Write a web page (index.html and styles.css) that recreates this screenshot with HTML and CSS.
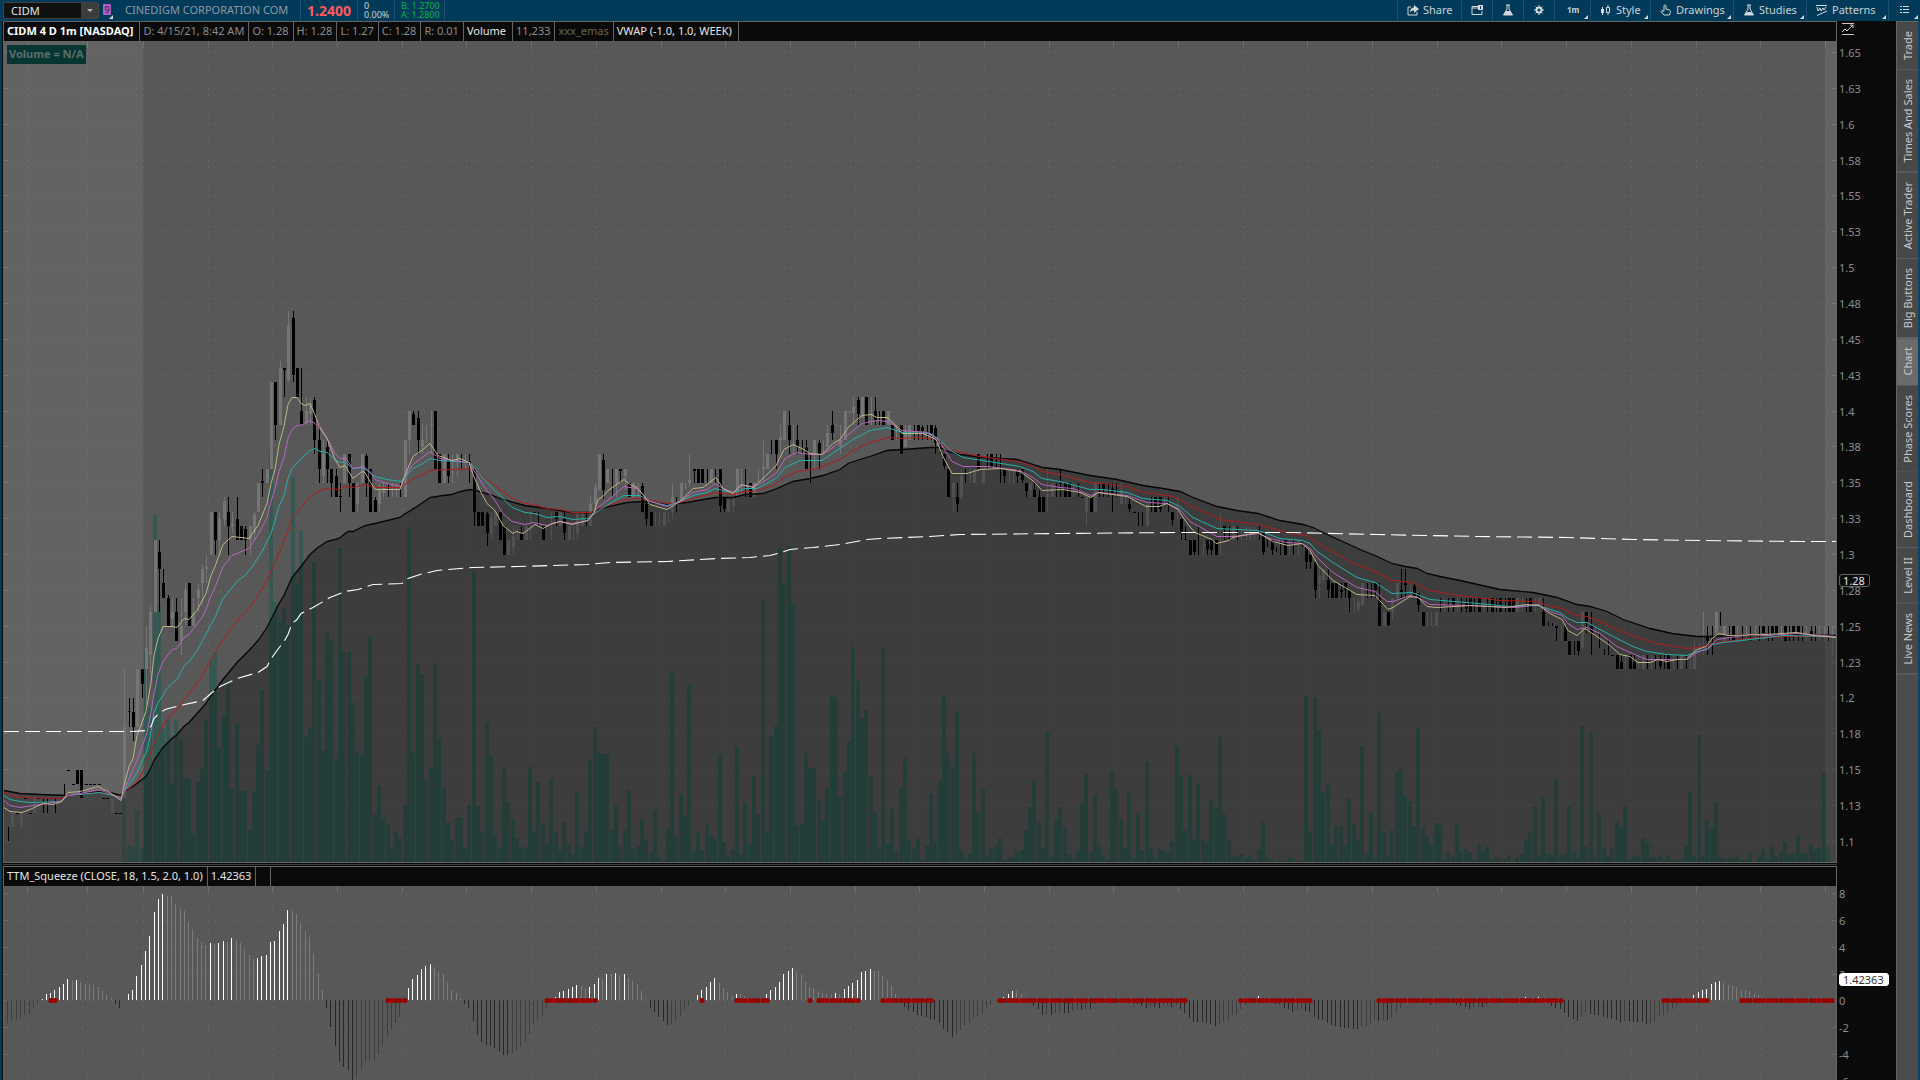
FILE: index.html
```html
<!DOCTYPE html>
<html lang="en">
<head>
<meta charset="utf-8">
<title>CIDM – Chart</title>
<link rel="stylesheet" href="styles.css">
</head>
<body>
<header class="topbar">
  <div class="symbol">
    <input class="symbol-input" type="text" value="CIDM" aria-label="Symbol">
    <button class="symbol-drop" aria-label="Recent symbols"></button>
  </div>
  <button class="link-badge has-menu" aria-label="Link group 9">9</button>
  <span class="company">CINEDIGM CORPORATION COM</span>
  <span class="last-price">1.2400</span>
  <span class="quote"><span>0</span><span>0.00%</span></span>
  <span class="quote quote-up"><span>B: 1.2700</span><span>A: 1.2800</span></span>
  <nav class="tools">
    <button class="tool tool-share"><svg class="icon" viewBox="0 0 12 12"><path d="M4 3H1v8h9V8" class="line"/><path d="M7 1l5 4-5 4V6.500C5 6.500 4 7 3 8.500 3 5 5 3.500 7 3.500z"/></svg>Share</button>
    <button class="tool tool-icon" aria-label="Alerts"><svg class="icon" viewBox="0 0 12 12"><path d="M7 2.500H1v8h10V7M1 4h6" class="line"/><path d="M7 1h5v5H7z"/><path d="M9.500 2v3" class="cut"/></svg></button>
    <button class="tool tool-icon" aria-label="Lab"><svg class="icon" viewBox="0 0 12 12"><path d="M4 1h4M5 1v4L1.500 11h9L7 5V1" class="line"/><path d="M4 7h4l2.500 4h-9z"/></svg></button>
    <button class="tool tool-icon" aria-label="Settings"><svg class="icon" viewBox="0 0 12 12"><path d="M6 1v10M1 6h10M2.500 2.500l7 7M9.500 2.500l-7 7" class="line"/><circle cx="6" cy="6" r="3.500"/><circle cx="6" cy="6" r="1.500" class="hole"/></svg></button>
    <button class="tool tool-frame has-menu">1m</button>
    <button class="tool tool-style has-menu"><svg class="icon" viewBox="0 0 12 12"><path d="M1 5h3v4H1zM2 3h1v8H2z"/><path d="M6.500 3.500h3v5h-3zM8 1v2.500M8 8.500V11" class="line"/></svg>Style</button>
    <button class="tool tool-drawings has-menu"><svg class="icon" viewBox="0 0 12 12"><path d="M4 7V2q0-1 1-1t1 1v3l3.500 1q1 .5 1 1.500L9.500 11H4L1 7.500q.5-1.500 2-.5z" class="line"/></svg>Drawings</button>
    <button class="tool tool-studies has-menu"><svg class="icon" viewBox="0 0 12 12"><path d="M4 1h4M5 1v4L1.500 11h9L7 5V1" class="line"/><path d="M4 8h4l2.500 3h-9z"/></svg>Studies</button>
    <button class="tool tool-patterns has-menu"><svg class="icon" viewBox="0 0 12 12"><path d="M0 1.500h11M1 3l1 4 2-3 1 3 2-3 1 2 2-3M1 11.500L11 7" class="line"/></svg>Patterns</button>
    <button class="tool tool-list has-menu" aria-label="Menu"><svg class="icon" viewBox="0 0 12 12"><path d="M2 2.500h2M2 5.500h2M2 8.500h2M5 2.500h6M5 5.500h6M5 8.500h6" class="line"/></svg></button>
  </nav>
</header>
<main class="workspace">
  <section class="charts">
    <div class="panel panel-price">
      <div class="pane">
        <div class="legend">
          <span class="strong study">CIDM 4 D 1m [NASDAQ]</span><span>D: 4/15/21, 8:42 AM</span><span>O: 1.28</span><span>H: 1.28</span><span>L: 1.27</span><span>C: 1.28</span><span>R: 0.01</span><span class="bright study">Volume</span><span>11,233</span><span class="muted">xxx_emas</span><span class="bright study">VWAP (-1.0, 1.0, WEEK)</span>
        </div>
        <div class="plot">
          <svg id="price" viewBox="4 41 1832 821" preserveAspectRatio="none" role="img" aria-label="Price chart"></svg>
          <span class="volume-label">Volume = N/A</span>
        </div>
      </div>
      <div class="axis">
        <svg class="axis-icon" viewBox="0 0 12 14"><path d="M0 1.500h12M0 12.500h12M0 10l3-3 2 2 6-6M8 3h3v3"/></svg>
        <ul class="scale">
          <li>1.65</li><li>1.63</li><li>1.6</li><li>1.58</li><li>1.55</li><li>1.53</li><li>1.5</li><li>1.48</li><li>1.45</li><li>1.43</li><li>1.4</li><li>1.38</li><li>1.35</li><li>1.33</li><li>1.3</li><li>1.28</li><li>1.25</li><li>1.23</li><li>1.2</li><li>1.18</li><li>1.15</li><li>1.13</li><li>1.1</li>
        </ul>
        <span class="tag tag-dark">1.28</span>
      </div>
    </div>
    <div class="splitter"></div>
    <div class="panel panel-squeeze">
      <div class="pane">
        <div class="legend">
          <span class="bright">TTM_Squeeze (CLOSE, 18, 1.5, 2.0, 1.0)</span><span class="bright">1.42363</span><span class="blank"></span>
        </div>
        <div class="plot">
          <svg id="squeeze" viewBox="4 886 1832 194" preserveAspectRatio="none" role="img" aria-label="TTM Squeeze histogram"></svg>
        </div>
      </div>
      <div class="axis">
        <ul class="scale scale-squeeze">
          <li>8</li><li>6</li><li>4</li><li>2</li><li>0</li><li>-2</li><li>-4</li><li>-6</li>
        </ul>
        <span class="tag tag-light">1.42363</span>
      </div>
    </div>
  </section>
  <aside class="rail">
    <button class="tab">Trade</button>
    <button class="tab">Times And Sales</button>
    <button class="tab">Active Trader</button>
    <button class="tab">Big Buttons</button>
    <button class="tab tab-active">Chart</button>
    <button class="tab">Phase Scores</button>
    <button class="tab">Dashboard</button>
    <button class="tab">Level II</button>
    <button class="tab">Live News</button>
  </aside>
</main>
<script src="chart.js"></script>
</body>
</html>
```
FILE: styles.css
```css
* { box-sizing: border-box; }
body {
  margin: 0;
  height: 100vh;
  overflow: hidden;
  display: flex;
  flex-direction: column;
  background: #0a0a0a;
  color: #8c8c8c;
  font: 11px/16px "Noto Sans", "Open Sans", sans-serif;
}
button, input { font: inherit; color: inherit; border: 0; padding: 0; margin: 0; background: none; }
svg { display: block; }

.topbar {
  flex: none;
  height: 21px;
  display: flex;
  align-items: stretch;
  background: #023b59;
}
.symbol {
  display: flex;
  width: 96px;
  height: 17px;
  margin: 2px 4px 0 3px;
  border: 1px solid #444;
  border-radius: 2px;
  background: #111;
}
.symbol-input { flex: 1; min-width: 0; padding-left: 7px; color: #e6e6e6; }
.symbol-drop { width: 17px; background: #3c3c3c; display: flex; align-items: center; justify-content: center; }
.symbol-drop::before { content: ""; border: 3px solid transparent; border-top-color: #b4b4b4; border-bottom: 0; }
.link-badge {
  width: 8px;
  height: 11px;
  margin: 4px 14px 0 0;
  border-radius: 1px;
  background: #b45fc8;
  color: #222;
  font-size: 9px;
  line-height: 11px;
  position: relative;
}
.company { line-height: 20px; color: #8b98a3; width: 175px; white-space: nowrap; }
.last-price {
  width: 57px;
  text-align: center;
  font-size: 14px;
  font-weight: bold;
  line-height: 21px;
  color: #ff5a5f;
  border-left: 1px solid #1b5071;
}
.quote {
  display: flex;
  flex-direction: column;
  padding: 1px 6px 0;
  width: 37px;
  border-left: 1px solid #1b5071;
  color: #c8d2d8;
  font-size: 9px;
  line-height: 9px;
  white-space: nowrap;
}
.quote-up { width: 51px; color: #00b446; border-right: 1px solid #1b5071; }
.tools { display: flex; margin-left: auto; }
.tool {
  position: relative;
  display: flex;
  align-items: center;
  gap: 4px;
  padding-left: 9px;
  padding-bottom: 1px;
  border-left: 1px solid #1b5071;
  color: #c6d2da;
  font-size: 11px;
}
.icon { width: 12px; height: 12px; flex: none; fill: #d2dade; }
.icon .line { fill: none; stroke: #d2dade; }
.icon .cut { stroke: #023b59; }
.icon .hole { fill: #023b59; }
.has-menu::after {
  content: "";
  position: absolute;
  right: 2px;
  bottom: 2px;
  border: 2px solid transparent;
  border-right-color: #d2dade;
  border-bottom-color: #d2dade;
}
.link-badge.has-menu::after { right: -2px; bottom: -4px; }
.tool-share { width: 64px; }
.tool-icon { width: 31px; }
.tool-frame { width: 36px; padding-left: 12px; font-size: 8px; font-weight: bold; }
.tool-style { width: 60px; }
.tool-drawings { width: 83px; }
.tool-studies { width: 73px; }
.tool-patterns { width: 82px; }
.tool-list { width: 32px; }

.workspace {
  flex: 1;
  min-height: 0;
  display: flex;
  border-left: 2px solid #023b59;
  border-right: 2px solid #0b4666;
}
.charts { flex: 1; min-width: 0; padding-left: 1px; display: grid; grid-template-rows: 842fr 3px 214fr; }
.panel { display: flex; min-height: 0; }
.pane {
  flex: 1;
  min-width: 0;
  display: flex;
  flex-direction: column;
  border: 1px solid #646464;
}
.panel-squeeze .pane { border-bottom: 0; }
.splitter { border: solid #0a0a0a; border-width: 1px 0; background: #3c3c3c; margin-right: 59px; }
.legend { flex: none; display: flex; height: 19px; background: #0a0a0a; line-height: 18px; white-space: nowrap; }
.legend span { padding: 0 4px 0 3px; border-right: 1px solid #646464; }
.legend .study { padding-right: 6px; }
.legend .strong { color: #fff; font-weight: bold; }
.legend .bright { color: #e6e6e6; }
.legend .muted { color: #6b6650; }
.legend .blank { width: 15px; }
.plot { flex: 1; min-height: 0; position: relative; background: #585858; }
.plot svg { width: 100%; height: 100%; }
.volume-label {
  position: absolute;
  left: 3px;
  top: 4px;
  padding: 0 2px 1px;
  background: #063532;
  color: #5a6e6a;
  font-weight: bold;
  line-height: 18px;
}

.axis { flex: none; width: 59px; position: relative; display: flex; flex-direction: column; overflow: hidden; }
.axis-icon { position: absolute; left: 5px; top: 1px; width: 12px; height: 14px; fill: none; stroke: #c8c8c8; }
.scale {
  flex: 1;
  margin: 24px 0 13px;
  padding: 0 0 0 2px;
  list-style: none;
  display: flex;
  flex-direction: column;
  justify-content: space-between;
}
.scale-squeeze { margin: 20px 0 -10px; }
.tag {
  position: absolute;
  left: 2px;
  height: 13px;
  padding: 0 4px 0 3px;
  border: 1px solid #646464;
  border-radius: 3px;
  line-height: 11px;
}
.tag-dark { top: calc(66% - 3px); background: #0a0a0a; color: #e6e6e6; }
.tag-light { top: 50%; background: #fff; color: #333; border-color: #fff; }

.rail { flex: none; width: 22px; background: #4c4c4c; border-left: 1px solid #646464; border-top: 1px solid #646464; }
.tab {
  display: block;
  width: 21px;
  padding: 9px 0;
  writing-mode: vertical-rl;
  transform: rotate(180deg);
  border-top: 1px solid #6a6a6a;
  background: #484848;
  color: #c8c8c8;
  font-size: 11px;
  line-height: 21px;
  white-space: nowrap;
}
.tab-active { background: #6a6a6a; }

.grid { fill: none; stroke: #6a6a6a; stroke-dasharray: 1 5; shape-rendering: crispEdges; }
.tick { fill: none; stroke: #6e6e6e; shape-rendering: crispEdges; }
.session { fill: #fff; fill-opacity: .07; }
.vol { fill: #355852; shape-rendering: crispEdges; }
.up { fill: #757575; shape-rendering: crispEdges; }
.down { fill: #000; shape-rendering: crispEdges; }
.cloud { fill: #000; fill-opacity: .3; }
.ma { fill: none; stroke-width: 1; }
.ma-black { stroke: #060606; stroke-width: 1.3; }
.ma-red { stroke: #b01c1c; }
.ma-cyan { stroke: #26b0ac; }
.ma-magenta { stroke: #ba64c0; }
.ma-yellow { stroke: #bfb488; }
.vwap { fill: none; stroke: #fff; stroke-width: 1.1; stroke-dasharray: 15 6; }
.pos-rise { fill: #fff; shape-rendering: crispEdges; }
.pos-fall { fill: #7c7c7c; shape-rendering: crispEdges; }
.neg-fall { fill: #262626; shape-rendering: crispEdges; }
.neg-rise { fill: #3e3e3e; shape-rendering: crispEdges; }
.squeeze-on { fill: #990000; }
```
FILE: chart.js
```js
// One-minute bars: index to horizontal position, cents above 1.00 to vertical position.
const barX = k => 8 + 4.3128 * k;
const priceY = c => 52.5 + (65 - c) * 14.345;
const BASE = 862, ZERO = 1000;

// Candles, by index of the first bar. Lower case: wick high,low[,body top,body bottom];
// upper case: body fills the whole range. g = close above open, b = close below open.
const candles = {
  0: "b11,10 G12,11 b12,12 G12,11 b13,13 b12,12 G13,12 b13,13 b13,12 b13,12 b13,13 b13,12 b13,13 b14,13 b15,15 b14,14 B15,14 B15,13 b14,14 b14,14 b14,14 b14,14 b13,13 b13,13 G13,12 b12,12 b12,12",
  27: "g22,13,18,13 b20,18,19.1,19 b20,17,19,18 G22,18 b22,20,22,21 g25,19.5,23.5,22 g26.5,21.7,26,23 G31,26 b31,26,30.2,29 b29,27,28,27 b27.2,25,27,25 g27,25,26,25.5 b27,24,26,24 g27,23,25,24 g28,25,27.5,26 B28,25 g27,25,26,25 g28,26,27.5,27 g29.3,26.5,29,28 g30,28,29.1,29 G33,30 b33,30,33,31 g33,30,32.5,31 g34,32,33.7,32.5 b34,30,33,32 g33,31.5,32.1,32 b34,31,32.5,31 B32,31 b32,30,31.8,31 g32,30,32,31 g33,31,32.8,31.5 G35,33 b36,34,35.1,35 G36,35 G42,36 b42,38,42,39 g43.5,39,43,39 b43,41,43,42.9 g47,42,46,42.2 b47,42,46.5,42.5 B43,41 b43,39,40,39 g41,39,40,39.2 g41,39,40.5,39.8 b41,37,40.8,38 b39,35,38,36 g38,35,37,35.5 b38,35,37.5,36 b36,34,36,35 b36,34,35.5,34 b35,33,34.1,34 G37,35 b37,34,37,35 B35,33 g35,33,35,33.5 G37,35 b37,34,36.9,35 B36,33 b34,33,33.8,33 g35,33,34.5,33.5 g35,34,34.7,34.3 b35,34 g35,34 g35,34 b35,34 G38,34 g40,37,40,38 b40,39,39.8,39 b40,37,39.5,38 g39,37,38,37.5 g39,37.8 g40,37,39.1,39 B40,36 B37,35 G37,35 b37,35,36.5,35.5 g37,35 g37,35.5,37,36.5 b37,36 g37,36 b37,35,36.5,36.3 b36,32,36,33 B33,32 B33,32 b33,30.6,32.8,31.5 g33,31,32.5,31.5 G33,32 B33,31 B32,30",
  116: "G31,30 g32,30,31.3,30.5 g32,31,31.1,31 b32,31,31.5,31 G32,31 g33,31 b33,33 b33,32 B32,31 g32,32 g33,31 b33,32,33,32.5 G33,32 b33,31,32.5,31.5 G32,31 g32,31 g33,31,33,31.5 G33,32 b33,32 g34,32,33.5,32 g35,33,34.7,33.5 G37,34.5 b37,33.9,36.6,34.5 G36,35 b36,34 g36,34,36,35 b36,35,36,35.8 g36,34.5,36,35.5 B35,34 G35,34 g35,34 b35,33,34.8,33 b34,32,33.5,32.5 B33,32 g33,32 g33,32 G33,32 g33,32.3 g35,32.5,34,33 b34,33 G35,33.5 g35,34.6 g37,34.8,35.2,35 b36,35,36,35.8 B36,35 B36,35 b36,35 G36,35 b36,35 b36,33,36,33.4 b34,33,34,33.2 G33.8,33 g34,33,33.8,33.4 G36,34 g36,34 b36,34 B35,34 G35,34 g36,35 g38,35,36.1,36 G37,36 b38,37 b38,36,38,37 g39,37,38.2,38 G40,38 b40,37,39,38 g39,37 b39,37,38,37.5 b38,37 b38,36,37.5,36 b37,35 g38,36,38,37 b38,36,37.8,37 g38,37 g39,37.5,38.5,37.5 b40,38,39,38.5 g39,39 g39,37,38,37.5 G40,38 g40,39.8 g41,39,40.3,39.9 b41,39,40.8,39.8 G41,39.5 B41,39 g41,39 b41,39,40,39.4 b40,39 B40,39 G40,39 B39,38 g39,38 B39,37 g39,37.5,38.7,37.5 G39,38 b39,38 b39,38,39,38.6 b39,38,38.9,38.6 b39,38 b39,38,39,38.5 b39,37,38.8,37.8 b38,37 b37,36,37,36.2 B36,34 g35,33,35,34 b35,33,34,33.5 g36,33.8,35.5,34 b36,35 g36,35 G36,35",
  225: "B37,36 G36,35 b37,36 b37,36,37,36.2 b37,36 b37,35 b36,35,36,35.5 g36,35 g36,35 b36,35,36,35.5 b36,35,36,35.2 b35,34,35,34.4 g35,34,35,34.5 b35,34,34.5,34 b34.5,33,34,33 B34,33 g36,33,34.2,34 G35,34 b35,34 b36,34,35,34.9 B35,34 B35,34 g35,34 b35,34 b34,34 g34,32,34,33 B34,33 G35,33 b35,34 b35,34,35,34.6 b35,34 b35,33,34.6,34.3 b35,34 g35,33.5,34.5,33.5 g34,33.5 b34,33,33.5,33.2 b33,33 b33,32 b33,32 G33.5,32 b34,33 B34,33 b34,33,34,33.2 g34,33.5 b34,33 b33,32,33,32.4 g34,32.5 b32.5,31,32.5,31.5 b32,31,31.1,31 B31,30 b31,30,31,30.2 b32,30 g31,30 b31,30,31,30.4 b31,30,31,30.3 B31,30 g33,30 b32,31,32,31.8 b32,31 G32,31 b32,31 g32,31 g32,31 g32,31 g32,31 b32,31 b31.5,30,31.5,30.2 b31,30.5 b31,30,31,30.3 b30.5,30.2 b31,30 B31,30 g31,30 b31,30 g31,30 b31,30.5 b30.5,29,30.5,29.5 b30,29,30,29.5 b29.5,27,29.5,27.5 g29,27,28.5,28 g29,28,29,28.2 b29,27,28.2,27.5 B28,27 B28,27 b28,27,27.5,27.4 b28,27,28,27.5 b27.5,26,27.5,27 g27,26 g27,26,26.7,26.2 g28,26.5,28,26.5 b28,27 b28,27 b28,27,28,27.5 b28,25,27,25 G26,25 b26,25,26,25.1 g27,25.5,27,26 g28,26.5,28,27 b29,27,27.5,27.4 b29,27,28,27.9 g28,27 b28,27,27.8,27 b27.3,26,27.3,26.5",
  328: "B26,25 g26,25,25.6,25.5 g26,25 G26,25 b27,26 g27,26 b27,26 b27,26,27,26.5 g27,26 b27,26 b27,26,26.6,26.2 B27,26 b27,26 B27,26 g27,26 b27,26 B27,26 b27,26 B27,26 b27,26 B27,26 B27,26 G27,26 g27,26 b27,26 B27,26 g27,26 G27,26.5 b27,25,26,25 b25.3,25 b25.2,25 b25,24,25,24.9 g25,24 B25,24 B24,23 b24,23 b24,23,24,23.3 G26,23.5 b26,24.5,26,25.3 b26,23,25,24.5 g25,24.5 b24.5,23.5 b23.4,23 b24,23 b23,23 B23,22 b23,22,22.5,22 g23,22 B23,22 b23,22,22.5,22 g23,22 G23,22 b23,22 g23,22 b23,22 b23,22,22.6,22.2 b23,22 B23,22 g23,22 b23,22 G23,22 b23,22 g23,22 g24,22,23.5,22 g24,23 g26,23 b25,23,24.3,24 b25,23 G26,24.5 b26,25 G25,24 b25,24 B25,24 g25,24 b25,24 g25,24 b25,24 g25,24 b25,24 B25,24.5 b25,24 b25,24,25,24.5 B25,24.3 g25,24 B25,24 b25,24 b25,24,25,24.6 b25,24,25,24.5 b25,24 g25,24 b25,24,24.7,24.3 b25,24 g25,24 g25,24 b25,24 g25,23 b24,24 b24,24"
};

// Volume bar heights, starting at bar 27.
const volume = [63,17,15,52,14,209,155,348,257,134,143,79,143,124,84,83,28,80,93,143,202,210,115,145,181,74,138,71,71,32,71,117,172,92,410,260,240,254,236,385,277,332,125,134,300,182,112,230,221,103,314,210,210,159,111,107,185,225,48,76,44,37,13,30,24,57,335,109,198,188,83,94,199,124,75,40,22,45,44,14,57,291,56,31,140,107,28,15,94,60,43,24,15,14,95,30,80,39,19,83,29,12,40,19,8,70,15,31,102,135,109,108,108,32,57,16,32,72,13,16,43,23,9,52,4,1,33,189,25,67,46,177,10,29,12,37,27,24,108,20,6,12,115,8,59,17,86,48,262,29,126,136,314,279,316,257,36,38,109,94,94,62,42,74,166,165,66,90,120,215,181,144,152,86,49,13,215,18,53,11,74,104,22,13,24,2,16,68,21,81,165,109,95,150,12,4,8,109,49,73,6,14,16,24,2,4,5,10,12,32,55,82,40,14,130,5,41,55,35,8,3,11,59,88,10,67,16,6,3,92,73,43,14,69,4,49,12,100,13,4,13,12,9,21,116,86,32,87,23,79,22,20,62,55,125,48,22,6,5,8,4,6,2,12,40,5,2,0,1,1,4,3,1,1,166,31,164,132,69,77,18,36,36,17,64,38,23,116,9,50,4,149,30,7,32,90,93,67,61,36,135,34,25,17,39,37,2,9,6,38,9,13,10,3,18,11,16,3,5,3,3,6,0,5,8,23,30,56,6,65,8,7,83,7,8,56,11,4,136,16,129,4,49,14,6,13,40,34,56,2,5,7,24,20,5,4,6,3,6,2,2,3,16,71,6,127,6,42,34,60,5,4,4,5,5,2,2,9,0,5,13,3,15,6,11,20,7,8,27,9,9,18,12,14,90,16];

const lines = {
  black: "4,790 20,793 40,794 67,795 80,794 100,791 110,792 121,795 124,791 133,786 146,776 150,769 154,760 163,747 172,738 176,735 184,726 189,722 206,703 211,695 223,679 237,662 249,650 258,640 267,627 275,611 279,603 284,595 288,586 292,577 301,566 310,554 318,547 327,541 339,538 348,531 353,531 365,525 375,523 400,517 404,514 417,506 430,497 443,495 452,494 457,492 465,490 472,489 490,494 503,499 525,505 547,508 572,512 592,512 600,508 627,502 643,501 667,504 687,502 715,497 733,497 745,494 763,493 777,488 793,481 810,478 823,475 840,469 848,463 860,459 870,456 887,450 903,449 930,447 940,447 948,451 960,454 983,457 1017,459 1030,463 1043,467 1060,469 1090,475 1117,479 1143,485 1163,488 1180,491 1193,497 1217,506 1237,510 1258,513 1280,520 1303,524 1313,527 1327,534 1347,543 1360,549 1375,555 1392,563 1405,566 1417,568 1427,573 1440,576 1460,580 1500,589 1533,592 1543,594 1557,597 1577,604 1590,606 1607,611 1623,619 1650,628 1672,633 1697,636 1710,636 1733,635 1767,634 1836,635",
  red: "4,792 20,797 60,798 67,795 100,792 121,796 128,789 137,781 146,766 154,743 163,725 172,713 180,706 184,699 193,688 202,676 211,659 223,639 240,617 249,608 258,595 267,580 275,562 284,541 292,518 301,507 310,496 320,490 328,488 339,489 344,486 353,487 365,484 375,487 400,487 417,476 423,474 430,470 470,468 477,472 487,479 500,489 513,498 525,503 533,504 547,508 560,509 572,512 592,512 598,508 627,499 637,498 647,499 667,503 680,502 693,498 715,492 733,494 745,491 753,491 767,487 775,484 784,477 797,471 813,469 823,466 842,458 853,450 870,442 888,437 903,438 913,437 935,438 943,445 952,450 980,456 1019,461 1033,466 1043,471 1060,474 1090,482 1103,483 1127,486 1140,491 1173,496 1183,501 1193,507 1210,514 1220,519 1258,524 1277,529 1290,533 1307,535 1323,546 1343,557 1357,564 1375,571 1392,580 1413,582 1430,590 1453,594 1500,600 1538,601 1547,605 1562,608 1577,615 1587,616 1600,621 1617,629 1637,637 1657,643 1687,648 1707,646 1717,642 1750,638 1783,636 1836,636",
  cyan: "4,795 10,799 20,801 30,802 60,801 68,795 80,794 100,792 121,797 128,786 137,772 147,750 150,737 154,712 158,702 163,695 167,688 172,683 177,679 184,666 189,661 197,650 206,634 211,624 215,617 223,598 237,581 245,575 253,565 262,551 271,533 275,520 279,506 284,495 288,478 292,468 301,458 310,450 315,448 320,451 327,452 335,459 340,462 345,461 353,468 363,467 375,476 387,479 401,481 413,468 423,463 430,458 440,460 470,462 478,472 487,482 497,492 507,502 512,507 525,512 535,513 547,517 560,516 573,519 588,518 600,509 615,500 624,495 640,495 650,501 667,505 680,501 693,495 707,492 715,488 723,490 733,492 745,488 757,488 767,483 777,477 785,467 800,460 822,460 840,448 853,439 870,430 887,427 903,432 930,433 938,438 952,451 963,457 983,460 1020,466 1033,471 1042,478 1060,481 1090,489 1103,489 1127,492 1143,498 1167,500 1180,506 1193,517 1217,528 1258,530 1280,538 1302,540 1310,543 1317,551 1333,562 1357,577 1375,582 1392,593 1412,592 1430,599 1478,603 1510,606 1538,605 1560,612 1568,618 1577,622 1587,622 1600,629 1617,638 1633,646 1647,651 1667,654 1687,655 1697,651 1707,649 1713,644 1723,642 1750,639 1783,635 1836,636",
  magenta: "4,800 10,805 20,807 33,805 47,803 60,801 68,795 80,793 98,789 110,793 121,798 128,781 137,760 147,732 151,712 154,693 158,674 163,661 172,649 177,648 184,637 189,634 202,617 206,609 211,595 215,587 223,566 232,555 249,548 258,534 267,517 271,501 275,488 279,471 284,457 288,438 292,429 297,425 303,424 310,420 315,423 322,431 328,439 335,453 340,458 346,458 353,468 363,466 370,471 375,479 387,483 401,486 404,477 413,464 430,451 440,458 453,460 469,462 477,475 487,490 495,500 503,513 512,521 525,524 533,522 547,525 560,521 572,523 588,520 598,507 610,498 624,486 637,488 650,501 667,506 680,501 693,492 707,489 715,483 723,488 733,492 742,485 755,486 767,479 777,472 785,458 797,452 810,454 822,454 833,447 842,440 853,430 862,423 877,420 888,421 902,430 927,432 938,439 952,461 963,466 987,466 1020,470 1033,477 1042,484 1060,487 1073,488 1091,495 1098,492 1127,495 1147,502 1167,503 1180,509 1190,521 1217,536 1233,536 1258,533 1270,538 1287,542 1302,543 1310,548 1318,558 1333,572 1357,587 1375,591 1387,601 1393,601 1410,595 1418,597 1430,604 1467,605 1517,607 1538,604 1550,611 1562,615 1568,623 1577,629 1587,627 1600,633 1617,646 1630,652 1647,659 1667,659 1687,659 1697,652 1707,648 1717,639 1750,634 1767,635 1797,633 1836,636",
  yellow: "4,807 10,811 22,812 30,809 43,803 53,804 62,801 68,792 80,791 98,786 110,792 121,800 124,785 129,766 133,758 137,735 146,711 151,682 154,655 158,638 163,626 172,626 177,627 184,618 189,619 197,610 206,593 211,575 215,566 223,544 232,536 249,538 258,525 267,503 271,483 275,469 279,444 284,426 288,404 292,397 297,397 301,403 305,405 310,403 314,412 319,425 327,438 335,459 340,467 345,465 353,478 362,471 365,472 370,481 375,489 400,489 404,477 413,456 423,449 430,443 438,455 452,460 460,458 469,462 473,474 480,490 487,503 495,510 503,525 513,533 516,531 523,533 535,524 543,528 552,523 560,521 572,524 588,520 594,512 598,499 603,496 608,490 624,479 630,484 637,487 643,494 650,504 667,509 680,501 693,488 703,487 716,477 723,488 733,493 741,484 753,487 765,476 776,465 784,449 793,444 802,448 810,453 822,454 833,443 840,439 848,427 862,415 871,414 877,417 887,417 895,424 902,433 923,433 936,439 943,456 952,473 967,473 980,469 1000,468 1020,471 1034,481 1042,490 1063,489 1080,492 1091,497 1098,492 1127,496 1146,506 1159,506 1167,503 1178,509 1188,524 1195,532 1212,539 1216,543 1229,540 1232,537 1258,532 1273,541 1288,545 1302,543 1310,550 1318,565 1333,580 1357,594 1375,595 1388,609 1393,607 1410,596 1418,597 1427,606 1437,607 1472,605 1505,607 1527,604 1539,605 1550,613 1562,619 1568,630 1577,635 1585,628 1597,636 1610,645 1620,654 1630,656 1638,662 1650,662 1658,659 1667,661 1677,659 1686,659 1697,649 1706,646 1713,637 1719,633 1728,635 1767,634 1797,632 1813,635 1836,637"
};
const vwap = "4,731 133,731 146,730 151,726 154,718 158,714 165,709 180,705 203,700 211,693 220,686 237,678 258,672 267,666 272,657 277,650 284,641 288,634 292,623 297,619 301,613 313,607 330,597 345,591 358,589 373,584 402,583 408,578 420,574 437,570 473,567 518,566 587,564 610,562 667,561 717,558 750,557 770,555 778,553 790,549 813,547 840,544 867,539 880,538 930,536 960,534 1060,533 1177,532 1293,532 1377,534 1478,536 1567,537 1633,539 1700,540 1800,541 1836,541";

// Squeeze momentum per bar, in chart pixels from the zero line.
const momentum = [-23,-21,-20,-18,-15,-14,-9,-3,1,6,7,10,13,16,21,19,20,18,16,16,15,13,9,5,2,-4,-8,-1,6,10,24,35,49,64,88,101,106,104,104,96,91,89,78,71,62,58,55,57,56,57,59,58,62,60,57,50,45,41,42,44,45,58,59,69,76,90,89,86,77,69,63,47,27,10,-8,-27,-46,-62,-67,-70,-80,-77,-69,-62,-61,-60,-54,-45,-37,-29,-23,-17,-1,12,21,25,31,34,36,33,28,26,17,10,7,2,-4,-8,-21,-35,-42,-45,-46,-48,-51,-55,-55,-53,-50,-47,-42,-34,-25,-20,-16,-8,0,3,8,9,11,13,15,14,12,13,16,22,21,26,26,27,25,26,22,19,16,9,1,-8,-12,-17,-21,-25,-24,-20,-16,-10,-6,-1,5,10,13,18,22,17,12,8,4,6,6,4,2,1,1,1,6,10,13,18,26,29,32,29,25,18,13,12,9,7,6,5,7,6,11,14,17,20,28,29,31,29,29,24,20,14,6,-1,-7,-10,-12,-15,-16,-17,-19,-20,-23,-29,-32,-37,-34,-30,-26,-23,-18,-17,-14,-8,-5,-1,0,3,6,9,9,6,3,1,-6,-9,-15,-14,-15,-13,-12,-13,-13,-11,-10,-10,-9,-9,-4,-2,-2,-2,-2,-2,-2,-2,-3,-4,-4,-6,-8,-6,-7,-8,-6,-5,-7,-6,-9,-13,-18,-22,-22,-22,-23,-24,-26,-24,-22,-20,-15,-14,-9,-5,-2,0,4,0,-1,-2,-4,-4,-8,-9,-12,-10,-9,-11,-12,-17,-20,-20,-23,-25,-26,-27,-28,-28,-29,-29,-27,-26,-24,-20,-21,-20,-20,-18,-13,-8,-3,-1,-1,-1,-1,-1,-5,-4,-3,-2,-2,-2,-5,-6,-7,-9,-8,-7,-7,-5,-2,-1,-1,-1,-1,-1,-1,1,3,1,1,3,-1,-3,-6,-8,-9,-13,-17,-19,-21,-17,-13,-14,-15,-15,-17,-18,-19,-20,-22,-21,-21,-22,-22,-22,-24,-23,-22,-17,-15,-13,-9,-6,-1,1,2,5,8,10,11,16,18,19,17,15,14,13,10,10,9,6,5,3,2,1,1,1,1,-1,-1,-1,-1,-2,-3,-3];
const squeezeRuns = [[10,11],[88,92],[125,136],[161,161],[169,176],[186,186],[188,197],[203,214],[230,273],[286,302],[318,360],[384,394],[402,423]];

const gridX = [27, 87, 143];
for (let i = 1; i <= 26; i++) gridX.push(Math.round(143 + i * 64.69));

const rect = (cls, x, y, w, h) => `<rect class="${cls}" x="${x}" y="${y}" width="${w}" height="${h}"/>`;

function grid(ys, top, bottom) {
  let out = "";
  for (const y of ys) {
    out += `<path class="grid" d="M4 ${y}.5H1836"/><path class="tick" d="M4 ${y}.5h4M1832 ${y}.5h4"/>`;
  }
  for (const x of gridX) {
    out += `<path class="grid" d="M${x}.5 ${top}V${bottom}"/><path class="tick" d="M${x}.5 ${top + 1}v5"/>`;
  }
  return out;
}

function candle(token, k) {
  const cls = token[0].toLowerCase() === "g" ? "up" : "down";
  const v = token.slice(1).split(",").map(Number);
  const full = token[0] !== token[0].toLowerCase();
  const x = Math.round(barX(k));
  const [h, l] = v.map(c => Math.round(priceY(c)));
  if (h === l) return rect(cls, x - 1, h, 3, 1);
  let out = rect(cls, x, h, 1, l - h);
  if (full || v.length === 4) {
    const t = full ? h : Math.round(priceY(v[2]));
    const b = full ? l : Math.round(priceY(v[3]));
    out += rect(cls, x - 1, t, 3, Math.max(1, b - t));
  }
  return out;
}

function drawPrice() {
  const ys = [];
  for (let i = 0; i < 23; i++) ys.push(Math.round(52 + i * 35.86));
  let out = grid(ys, 41, 862);
  volume.forEach((h, i) => {
    const x = Math.round(barX(i + 27)) - 2;
    if (h) out += rect("vol", x, BASE - h, 4, h);
  });
  out += rect("session", 4, 41, 139, 821) + rect("session", 1825, 41, 11, 821);
  for (const start in candles) {
    candles[start].split(" ").forEach((t, i) => { out += candle(t, +start + i); });
  }
  out += `<polygon class="cloud" points="${lines.black} 1836,862 4,862"/>`;
  // Half-pixel shift keeps level strokes on one row of pixels.
  out += `<g transform="translate(0 .5)">`;
  for (const name in lines) out += `<polyline class="ma ma-${name}" points="${lines[name]}"/>`;
  out += `<polyline class="vwap" points="${vwap}"/></g>`;
  document.getElementById("price").innerHTML = out;
}

function drawSqueeze() {
  let out = grid([893, 920, 947, 974, 1000, 1027, 1054], 886, 1080);
  momentum.forEach((m, k) => {
    const x = Math.round(barX(k)) - 1;
    const rising = m > (momentum[k - 1] ?? m - 1);
    if (m > 0) out += rect(rising ? "pos-rise" : "pos-fall", x, ZERO - m, 1, m);
    if (m < 0) out += rect(rising ? "neg-rise" : "neg-fall", x, ZERO, 1, -m);
  });
  for (const [from, to] of squeezeRuns) {
    for (let k = from; k <= to; k++) {
      out += `<circle class="squeeze-on" cx="${Math.round(barX(k))}" cy="1000.5" r="2.6"/>`;
    }
  }
  document.getElementById("squeeze").innerHTML = out;
}

drawPrice();
drawSqueeze();
```
